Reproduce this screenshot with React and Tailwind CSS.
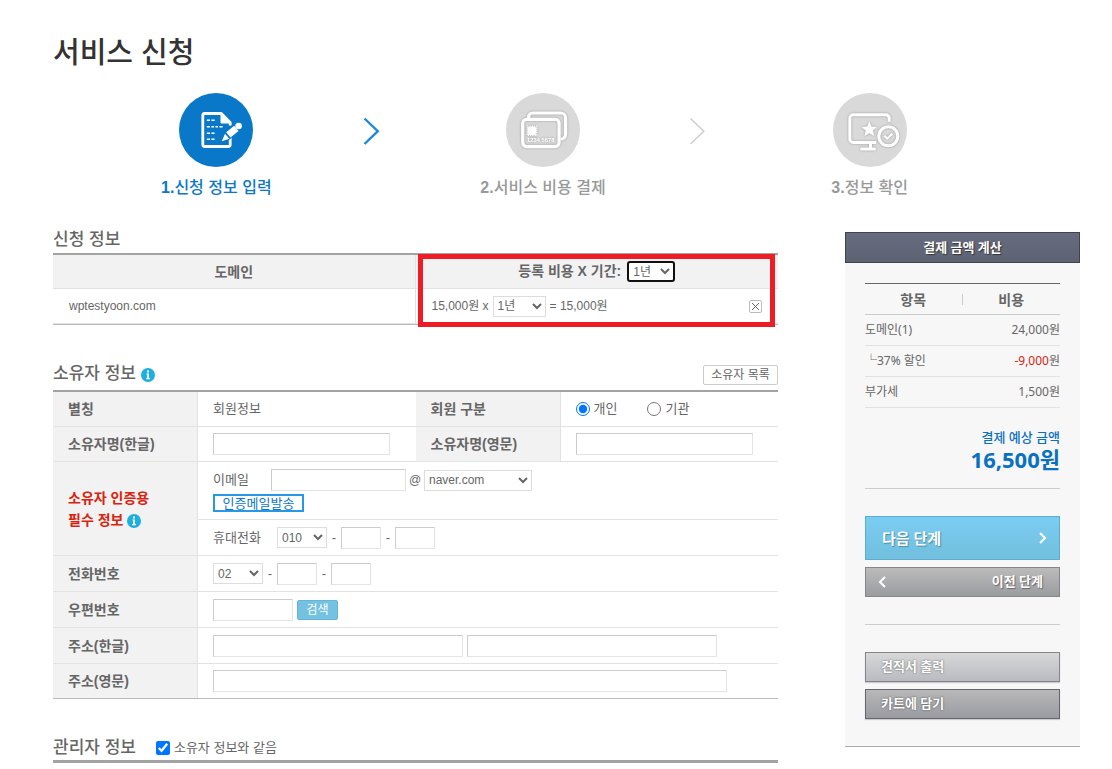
import React, { useState } from 'react';
import clsx from 'clsx';

const STEPS = [
  { no: '1.', label: '신청 정보 입력', icon: FormIcon, active: true },
  { no: '2.', label: '서비스 비용 결제', icon: CardIcon, active: false },
  { no: '3.', label: '정보 확인', icon: MonitorIcon, active: false },
];

const COSTS = [
  { name: '도메인(1)', price: '24,000' },
  { name: '└37% 할인', price: '-9,000', discount: true },
  { name: '부가세', price: '1,500' },
];

const inputClass = 'h-[22px] px-1 text-xs bg-white border border-t-[#ccc] border-l-[#ccc] border-r-[#e4e4e4] border-b-[#e4e4e4] outline-none align-middle';
const selectClass = 'h-[21px] pl-0 text-xs bg-white border border-[#ddd] outline-none align-middle';
const thClass = 'px-[15px] bg-[#f2f2f2] border-b border-r border-[#e2e2e2] text-left text-sm leading-[22px] font-bold';
const tdClass = 'px-[15px] border-b border-[#e2e2e2]';

function FormIcon() {
  return (
    <svg viewBox="0 0 74 74" className="size-[74px]" fill="none" stroke="#fff">
      <path d="M51.200 36v15.500a2 2 0 0 1-2 2H25.800a2 2 0 0 1-2-2v-29a2 2 0 0 1 2-2h16.400l9 9v3" strokeWidth="2.800" />
      <path d="M42 20.500v9.500h9.500z" fill="#fff" strokeWidth="1" />
      <path d="M27.800 27.300h3.200m1.400 0h3.200M27.800 33.800h3.200m1.400 0h2.600m1.400 0h2.600m1.400 0h3.200M27.800 40.200h3.200m1.400 0h3.200M27.800 46.300h3.200m1.400 0h3.200" strokeWidth="1.600" />
      <path d="M43 47.700l3-7.200 10-8.500 4 5-10.500 8.500z" fill="#0a78c8" stroke="#0a78c8" strokeWidth="3" />
      <path d="M47.200 39.200l8-6.400 4.300 5.200-8 6.500z" fill="#fff" stroke="none" />
      <path d="M46 40.800l4.300 5-7.500 2.400z" fill="#fff" stroke="none" />
      <circle cx="59.600" cy="33" r="3.300" fill="#fff" stroke="none" />
    </svg>
  );
}

function CardIcon() {
  return (
    <svg viewBox="0 0 74 74" className="size-[74px] drop-shadow-[0_0_1px_#999]" fill="none" stroke="#fff" strokeWidth="3.200">
      <path d="M22.600 25v-1a4 4 0 0 1 4-4h28a5 5 0 0 1 5 5v16a5 5 0 0 1-5 5" />
      <rect x="16.700" y="26.300" width="36.400" height="27.300" rx="4" />
      <rect x="22" y="34" width="8" height="7.500" rx="1" fill="#fff" strokeWidth="1" />
      <rect x="21.200" y="33.200" width="9.600" height="9.100" strokeWidth="1.200" strokeDasharray="1.200 1" />
      <text x="21" y="48.600" fill="#fff" stroke="none" fontSize="5.800" fontWeight="700" fontFamily="Liberation Sans, sans-serif">1234 5678</text>
    </svg>
  );
}

function MonitorIcon() {
  return (
    <svg viewBox="0 0 74 74" className="size-[74px] drop-shadow-[0_0_1px_#999]" fill="none" stroke="#fff" strokeWidth="3">
      <path d="M43 49.500H20.300a3.500 3.500 0 0 1-3.500-3.500V25.300a3.500 3.500 0 0 1 3.500-3.500h32.400a3.500 3.500 0 0 1 3.500 3.500v3.400" />
      <path d="M42 49.500h-4.500v6m-9 .5h13" strokeLinecap="round" />
      <path d="M36.300 28.300l2.200 5.100 5.500.5-4.100 3.700 1.200 5.500-4.800-2.900-4.800 2.900 1.200-5.500-4.100-3.700 5.500-.5z" fill="#fff" stroke="none" />
      <circle cx="55.300" cy="43.300" r="9.500" />
      <path d="M51.300 42.700l3 2.800 5-4.700" strokeWidth="2.200" />
    </svg>
  );
}

function StepArrow({ active }) {
  return (
    <svg viewBox="0 0 17 28" className="w-[17px] h-7" fill="none" stroke={active ? '#1e88dc' : '#ccc'} strokeWidth={active ? 2.4 : 1.4}>
      <path d="M1.500 1.500L14.800 14.200 1.500 27" />
    </svg>
  );
}

function InfoIcon() {
  return (
    <svg viewBox="0 0 14 14" className="size-3.5 inline-block align-[-3px]" role="img" aria-label="도움말">
      <circle cx="7" cy="7" r="7" fill="#1cb0e0" />
      <path d="M6 2.500h2v2H6zM5.500 5.500H8V10h1v1.200H5.200V10H6V6.600h-.5z" fill="#fff" />
    </svg>
  );
}

function Steps() {
  return (
    <ol className="flex mt-[18px] pr-[47px]">
      {STEPS.map(({ no, label, icon: Icon, active }, i) => (
        <li key={label} className="flex-1 flex items-start">
          <span className="w-[17px] shrink-0" />
          <div className="flex-1 flex flex-col items-center">
            <span className={clsx('rounded-full', active ? 'bg-[#0a78c8]' : 'bg-[#d9d9d9]')}>
              <Icon />
            </span>
            <span className={clsx('mt-[9px] text-base leading-6 font-medium whitespace-nowrap', active ? 'text-[#0a78c8]' : 'text-[#999]')}>
              <b>{no}</b>{label}
            </span>
          </div>
          <span className="w-[17px] shrink-0 mt-6">
            {i < STEPS.length - 1 && <StepArrow active={active} />}
          </span>
        </li>
      ))}
    </ol>
  );
}

function YearSelect({ className, label }) {
  return (
    <select aria-label={label} defaultValue="1" className={clsx('bg-white text-xs outline-none align-middle', className)}>
      <option value="1">1년</option>
      <option value="2">2년</option>
      <option value="3">3년</option>
    </select>
  );
}

function DomainTable() {
  return (
    <section className="mt-7">
      <h2 className="text-[17px] leading-6 font-medium">신청 정보</h2>
      <div className="relative mt-px border-t-2 border-[#a3a3a3]">
        <table className="w-full table-fixed border-separate border-spacing-0 border-b border-[#bbb]">
          <thead>
            <tr className="text-sm">
              <th className="h-[34px] bg-[#f2f2f2] border-b border-r border-[#e2e2e2]">도메인</th>
              <th className="h-[34px] bg-[#f2f2f2] border-b border-[#e2e2e2]">
                <span className="mr-1.5">등록 비용 X 기간:</span>
                <YearSelect label="전체 기간" className="w-12 h-[21px] border-2 border-[#101010] rounded-[3px] font-normal" />
              </th>
            </tr>
          </thead>
          <tbody>
            <tr className="text-xs">
              <td className="h-[35px] px-4 border-b border-r border-[#e2e2e2]">wptestyoon.com</td>
              <td className="h-[35px] px-4 border-b border-[#e2e2e2]">
                <div className="flex items-center gap-1">
                  <span>15,000원 x</span>
                  <YearSelect label="등록 기간" className="w-[53px] h-[21px] border border-[#ddd]" />
                  <span>= 15,000원</span>
                  <button type="button" aria-label="삭제" className="ml-auto size-[13px] border border-[#bbb] rounded-[2px] bg-white">
                    <svg viewBox="0 0 11 11" className="size-[11px]" stroke="#666" strokeWidth="1">
                      <path d="M2 2l7 7M9 2L2 9" />
                    </svg>
                  </button>
                </div>
              </td>
            </tr>
          </tbody>
        </table>
        {/* highlight around the cost column */}
        <div className="absolute top-[-1px] bottom-[-2px] left-1/2 right-[3px] ml-0.5 border-[5px] border-[#ee1c25] pointer-events-none" />
      </div>
    </section>
  );
}

function OwnerTable() {
  const [kind, setKind] = useState('person');

  return (
    <section className="mt-[37px]">
      <div className="flex items-end justify-between">
        <h2 className="text-[17px] leading-6 font-medium pb-1">소유자 정보 <InfoIcon /></h2>
        <button type="button" className="mb-[5px] w-[75px] h-5 border border-[#ccc] rounded-[2px] bg-white text-xs leading-[18px]">소유자 목록</button>
      </div>
      <table className="w-full table-fixed border-separate border-spacing-0 border-t-2 border-b border-t-[#a3a3a3] border-b-[#bbb] text-[13px]">
        <colgroup>
          <col className="w-[20%]" />
          <col className="w-[30%]" />
          <col className="w-[20%]" />
          <col className="w-[30%]" />
        </colgroup>
        <tbody>
          <tr>
            <th className={clsx(thClass, 'h-[35px]')}>별칭</th>
            <td className={tdClass}>회원정보</td>
            <th className={thClass}>회원 구분</th>
            <td className={tdClass}>
              <div className="flex items-center gap-[30px]">
                <label className="flex items-center gap-1">
                  <input type="radio" name="kind" className="size-3.5" checked={kind === 'person'} onChange={() => setKind('person')} />
                  개인
                </label>
                <label className="flex items-center gap-1">
                  <input type="radio" name="kind" className="size-3.5" checked={kind === 'org'} onChange={() => setKind('org')} />
                  기관
                </label>
              </div>
            </td>
          </tr>
          <tr>
            <th className={clsx(thClass, 'h-[35px]')}><label htmlFor="name-ko">소유자명(한글)</label></th>
            <td className={tdClass}><input id="name-ko" type="text" className={clsx(inputClass, 'w-[177px]')} /></td>
            <th className={thClass}><label htmlFor="name-en">소유자명(영문)</label></th>
            <td className={tdClass}><input id="name-en" type="text" className={clsx(inputClass, 'w-[177px]')} /></td>
          </tr>
          <tr>
            <th rowSpan={2} className={clsx(thClass, 'text-[#d9230f]')}>
              소유자 인증용<br />필수 정보 <InfoIcon />
            </th>
            <td colSpan={3} className={clsx(tdClass, 'h-[58px]')}>
              <div className="flex items-center">
                <label htmlFor="email" className="w-[58px]">이메일</label>
                <input id="email" type="text" className={clsx(inputClass, 'w-[135px]')} />
                <span className="w-[18px] text-center text-xs">@</span>
                <select aria-label="이메일 도메인" className={clsx(selectClass, 'w-[108px]')}>
                  <option>naver.com</option>
                  <option>gmail.com</option>
                </select>
              </div>
              <button type="button" className="mt-[3px] flex items-center justify-center w-[91px] h-[18px] border-2 border-[#2798e6] bg-white text-[#0a78c8] text-[13px] leading-none overflow-hidden">인증메일발송</button>
            </td>
          </tr>
          <tr>
            <td colSpan={3} className={clsx(tdClass, 'h-9')}>
              <div className="flex items-center">
                <label htmlFor="mobile" className="w-16">휴대전화</label>
                <select id="mobile" className={clsx(selectClass, 'w-[50px]')}>
                  <option>010</option>
                  <option>011</option>
                </select>
                <span className="w-3.5 text-center">-</span>
                <input type="text" aria-label="휴대전화 가운데 자리" className={clsx(inputClass, 'w-10')} />
                <span className="w-3.5 text-center">-</span>
                <input type="text" aria-label="휴대전화 끝자리" className={clsx(inputClass, 'w-10')} />
              </div>
            </td>
          </tr>
          <tr>
            <th className={clsx(thClass, 'h-9')}><label htmlFor="tel">전화번호</label></th>
            <td colSpan={3} className={tdClass}>
              <div className="flex items-center">
                <select id="tel" className={clsx(selectClass, 'w-[50px]')}>
                  <option>02</option>
                  <option>031</option>
                </select>
                <span className="w-3.5 text-center">-</span>
                <input type="text" aria-label="전화번호 가운데 자리" className={clsx(inputClass, 'w-10')} />
                <span className="w-3.5 text-center">-</span>
                <input type="text" aria-label="전화번호 끝자리" className={clsx(inputClass, 'w-10')} />
              </div>
            </td>
          </tr>
          <tr>
            <th className={clsx(thClass, 'h-9')}><label htmlFor="zip">우편번호</label></th>
            <td colSpan={3} className={tdClass}>
              <div className="flex items-center gap-1">
                <input id="zip" type="text" className={clsx(inputClass, 'w-20')} />
                <button type="button" className="w-[41px] h-5 rounded-[2px] border border-[#62b5d8] bg-[#74c1e2] text-white text-xs leading-[18px]">검색</button>
              </div>
            </td>
          </tr>
          <tr>
            <th className={clsx(thClass, 'h-9')}><label htmlFor="addr-ko">주소(한글)</label></th>
            <td colSpan={3} className={tdClass}>
              <div className="flex gap-1">
                <input id="addr-ko" type="text" className={clsx(inputClass, 'w-[250px]')} />
                <input type="text" aria-label="상세 주소" className={clsx(inputClass, 'w-[250px]')} />
              </div>
            </td>
          </tr>
          <tr>
            <th className={clsx(thClass, 'h-[34px] border-b-0')}><label htmlFor="addr-en">주소(영문)</label></th>
            <td colSpan={3} className="px-[15px]"><input id="addr-en" type="text" className={clsx(inputClass, 'w-[514px]')} /></td>
          </tr>
        </tbody>
      </table>
    </section>
  );
}

function ManagerSection() {
  return (
    <section className="mt-9 flex items-center gap-5 h-7 border-b-3 border-[#a3a3a3]">
      <h2 className="text-[17px] leading-6 font-medium">관리자 정보</h2>
      <label className="flex items-center gap-1 text-[13px]">
        <input type="checkbox" defaultChecked className="size-3.5" />
        소유자 정보와 같음
      </label>
    </section>
  );
}

function Chevron({ left }) {
  return (
    <svg viewBox="0 0 8 12" className="w-2 h-3" fill="none" stroke="#fff" strokeWidth="2">
      <path d={left ? 'M7 1L2 6l5 5' : 'M1 1l5 5-5 5'} />
    </svg>
  );
}

function PaymentSidebar() {
  return (
    <aside className="w-[235px] shrink-0 mt-8 pb-[27px] self-start bg-[#f7f7f7] border-b border-[#aaa] font-['Noto_Sans','Noto_Sans_CJK_KR',sans-serif]">
      <h2 className="h-[31px] border border-[#3f4350] bg-linear-to-b from-[#666c7e] to-[#5d6373] text-center text-[13px] leading-[29px] font-bold text-white [text-shadow:1px_1px_1px_#333]">결제 금액 계산</h2>
      <div className="px-5 pt-5">
        <table className="w-full border-separate border-spacing-0 border-t border-[#666]">
          <thead>
            <tr className="text-sm leading-[11px]">
              <th className="h-[31px] w-1/2 p-0 border-b border-[#ccc]"><span className="block border-r border-[#ccc]">항목</span></th>
              <th className="h-[31px] w-1/2 p-0 border-b border-[#ccc]">비용</th>
            </tr>
          </thead>
          <tbody className="text-xs">
            {COSTS.map((row) => (
              <tr key={row.name}>
                <td className="h-[31px] p-0 border-b border-[#e2e2e2]">{row.name}</td>
                <td className="h-[31px] p-0 border-b border-[#e2e2e2] text-right">
                  <span className={row.discount ? 'text-[#d9230f]' : ''}>{row.price}</span>원
                </td>
              </tr>
            ))}
          </tbody>
        </table>
        <dl className="pt-[19px] pb-4 border-b border-[#ccc] text-right font-bold text-[#0a70c0]">
          <dt className="text-[13px] leading-5 font-medium">결제 예상 금액</dt>
          <dd className="text-[22px] leading-[25px]">16,500원</dd>
        </dl>
        <div className="pt-[27px] pb-[27px] border-b border-[#ccc]">
          <button type="button" className="flex items-center justify-between w-full h-11 pl-4 pr-3 border border-[#5cadd0] bg-linear-to-b from-[#7acdf2] to-[#72bfde] text-[15px] font-bold text-white [text-shadow:1px_1px_1px_#4a8aa8]">
            다음 단계
            <Chevron />
          </button>
          <button type="button" className="mt-[7px] flex items-center justify-between w-full h-[30px] pl-3 pr-4 border border-[#85858b] bg-linear-to-b from-[#bbb] to-[#9b9ca0] text-[13px] font-bold text-white [text-shadow:1px_1px_1px_#666]">
            <Chevron left />
            이전 단계
          </button>
        </div>
        <div className="flex flex-col gap-[7px] pt-[27px]">
          <button type="button" className="h-[30px] px-[15px] border border-[#85858b] bg-linear-to-b from-[#d8d8d8] to-[#b9bbc1] text-left text-[13px] font-bold text-white shadow-[0_1px_1px_#ccc] [text-shadow:0_0_2px_#555]">견적서 출력</button>
          <button type="button" className="h-[30px] px-[15px] border border-[#65656b] bg-linear-to-b from-[#b8b8b8] to-[#9a9ba1] text-left text-[13px] font-bold text-white shadow-[0_1px_1px_#ccc] [text-shadow:0_0_2px_#444]">카트에 담기</button>
        </div>
      </div>
    </aside>
  );
}

export default function App() {
  return (
    <div className="pl-[53px] pr-8 pt-[31px] bg-white text-[#666] font-['Liberation_Sans','Noto_Sans_CJK_KR',sans-serif]">
      <h1 className="text-[29px] leading-[44px] font-medium text-[#333]">서비스 신청</h1>
      <Steps />
      <div className="flex gap-[67px]">
        <main className="flex-1 min-w-0">
          <DomainTable />
          <OwnerTable />
          <ManagerSection />
        </main>
        <PaymentSidebar />
      </div>
    </div>
  );
}
